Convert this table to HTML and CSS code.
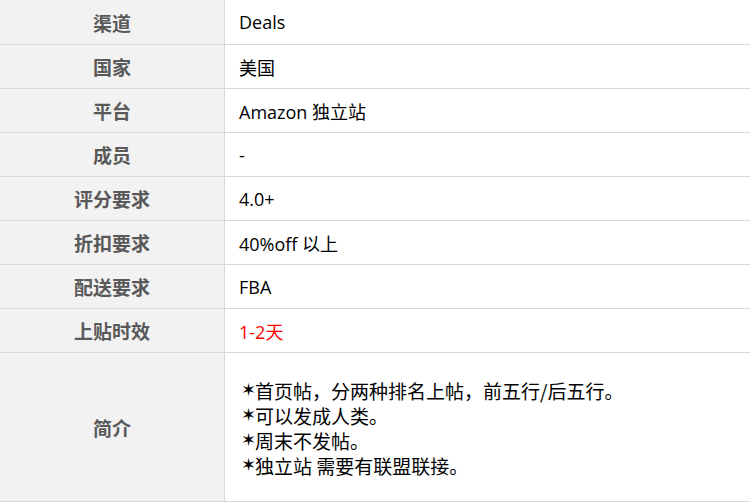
FILE: index.html
```html
<!DOCTYPE html>
<html lang="zh-CN">
<head>
<meta charset="utf-8">
<link rel="stylesheet" href="styles.css">
</head>
<body>
<div class="table">
  <div class="row first"><div class="label">渠道</div><div class="value">Deals</div></div>
  <div class="row"><div class="label">国家</div><div class="value">美国</div></div>
  <div class="row"><div class="label">平台</div><div class="value">Amazon 独立站</div></div>
  <div class="row"><div class="label">成员</div><div class="value">-</div></div>
  <div class="row"><div class="label">评分要求</div><div class="value">4.0+</div></div>
  <div class="row"><div class="label">折扣要求</div><div class="value">40%off 以上</div></div>
  <div class="row"><div class="label">配送要求</div><div class="value">FBA</div></div>
  <div class="row"><div class="label">上贴时效</div><div class="value red">1-2天</div></div>
  <div class="row last"><div class="label">简介</div><div class="value multi">
    <div class="line"><span class="star">✶</span>首页帖，分两种排名上帖，前五行/后五行。</div>
    <div class="line"><span class="star">✶</span>可以发成人类。</div>
    <div class="line"><span class="star">✶</span>周末不发帖。</div>
    <div class="line"><span class="star">✶</span>独立站 需要有联盟联接。</div>
  </div></div>
</div>
</body>
</html>
```
FILE: styles.css
```css
html, body {
  margin: 0;
  padding: 0;
  background: #ffffff;
}
body {
  width: 750px;
  height: 502px;
  overflow: hidden;
  font-family: "Open Sans", "Noto Sans CJK SC", sans-serif;
}
.table {
  display: flex;
  flex-direction: column;
}
.row {
  display: grid;
  grid-template-columns: 225px 1fr;
  height: 43px;
  border-bottom: 1px solid #d9d9d9;
}
.row.first { height: 44px; }
.row.last { height: 148px; }
.label {
  background: #f2f2f2;
  border-right: 1px solid #d9d9d9;
  display: flex;
  align-items: center;
  justify-content: center;
  font-family: "Noto Sans CJK SC", sans-serif;
  font-weight: 700;
  font-size: 19px;
  color: #595959;
}
.value {
  display: flex;
  align-items: center;
  padding-left: 14px;
  font-size: 18px;
  color: #000000;
}
.value.red { color: #ff0000; }
.value.multi {
  flex-direction: column;
  align-items: flex-start;
  justify-content: center;
  font-size: 19px;
  padding-left: 16px;
  padding-top: 1px;
  font-family: "Noto Sans CJK SC", sans-serif;
}
.line {
  height: 25px;
  line-height: 25px;
  display: flex;
  align-items: center;
  white-space: nowrap;
}
.star {
  font-family: "DejaVu Sans", sans-serif;
  font-size: 18px;
  line-height: 1;
  width: 14px;
}
```
